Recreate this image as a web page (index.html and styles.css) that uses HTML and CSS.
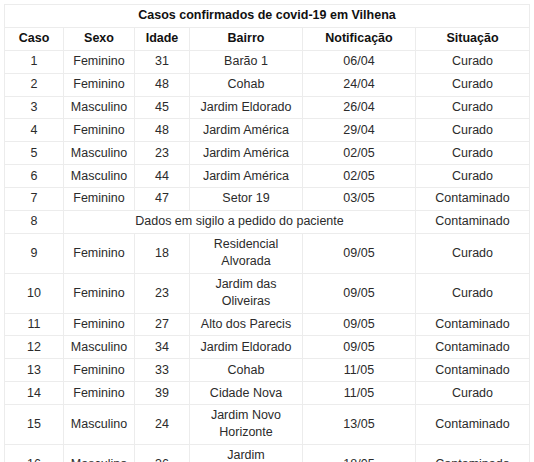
FILE: index.html
```html
<!DOCTYPE html>
<html lang="pt-BR">
<head>
<meta charset="utf-8">
<title>Casos confirmados de covid-19 em Vilhena</title>
<link rel="stylesheet" href="styles.css">
</head>
<body>
<table class="cases">
  <colgroup>
    <col class="c-caso"><col class="c-sexo"><col class="c-idade"><col class="c-bairro"><col class="c-notif"><col class="c-sit">
  </colgroup>
  <thead>
    <tr><th colspan="6" class="title">Casos confirmados de covid-19 em Vilhena</th></tr>
    <tr><th>Caso</th><th>Sexo</th><th>Idade</th><th>Bairro</th><th>Notificação</th><th>Situação</th></tr>
  </thead>
  <tbody>
    <tr><td>1</td><td>Feminino</td><td>31</td><td>Barão 1</td><td>06/04</td><td>Curado</td></tr>
    <tr><td>2</td><td>Feminino</td><td>48</td><td>Cohab</td><td>24/04</td><td>Curado</td></tr>
    <tr><td>3</td><td>Masculino</td><td>45</td><td>Jardim Eldorado</td><td>26/04</td><td>Curado</td></tr>
    <tr><td>4</td><td>Feminino</td><td>48</td><td>Jardim América</td><td>29/04</td><td>Curado</td></tr>
    <tr><td>5</td><td>Masculino</td><td>23</td><td>Jardim América</td><td>02/05</td><td>Curado</td></tr>
    <tr><td>6</td><td>Masculino</td><td>44</td><td>Jardim América</td><td>02/05</td><td>Curado</td></tr>
    <tr><td>7</td><td>Feminino</td><td>47</td><td>Setor 19</td><td>03/05</td><td>Contaminado</td></tr>
    <tr><td>8</td><td colspan="4">Dados em sigilo a pedido do paciente</td><td>Contaminado</td></tr>
    <tr><td>9</td><td>Feminino</td><td>18</td><td>Residencial Alvorada</td><td>09/05</td><td>Curado</td></tr>
    <tr><td>10</td><td>Feminino</td><td>23</td><td>Jardim das Oliveiras</td><td>09/05</td><td>Curado</td></tr>
    <tr><td>11</td><td>Feminino</td><td>27</td><td>Alto dos Parecis</td><td>09/05</td><td>Contaminado</td></tr>
    <tr><td>12</td><td>Masculino</td><td>34</td><td>Jardim Eldorado</td><td>09/05</td><td>Contaminado</td></tr>
    <tr><td>13</td><td>Feminino</td><td>33</td><td>Cohab</td><td>11/05</td><td>Contaminado</td></tr>
    <tr><td>14</td><td>Feminino</td><td>39</td><td>Cidade Nova</td><td>11/05</td><td>Curado</td></tr>
    <tr><td>15</td><td>Masculino</td><td>24</td><td>Jardim Novo Horizonte</td><td>13/05</td><td>Contaminado</td></tr>
    <tr><td>16</td><td>Masculino</td><td>36</td><td>Jardim Universitário</td><td>18/05</td><td>Contaminado</td></tr>
  </tbody>
</table>
</body>
</html>
```
FILE: styles.css
```css
html, body {
  margin: 0;
  padding: 0;
  background: #fff;
}

body {
  font-family: "Liberation Sans", Arial, sans-serif;
  font-size: 12.5px;
  color: #2b2b2b;
}

.cases {
  margin: 4px 0 0 4px;
  border-collapse: collapse;
  table-layout: fixed;
  width: 525px;
}

.c-caso { width: 59px; }
.c-sexo { width: 71px; }
.c-idade { width: 55px; }
.c-bairro { width: 113px; }
.c-notif { width: 113px; }
.c-sit { width: 114px; }

.cases th,
.cases td {
  border: 1px solid #ececec;
  padding: 2.45px 5px;
  line-height: 17px;
  text-align: center;
  vertical-align: middle;
}

.cases th {
  font-weight: bold;
  color: #111;
}
```
